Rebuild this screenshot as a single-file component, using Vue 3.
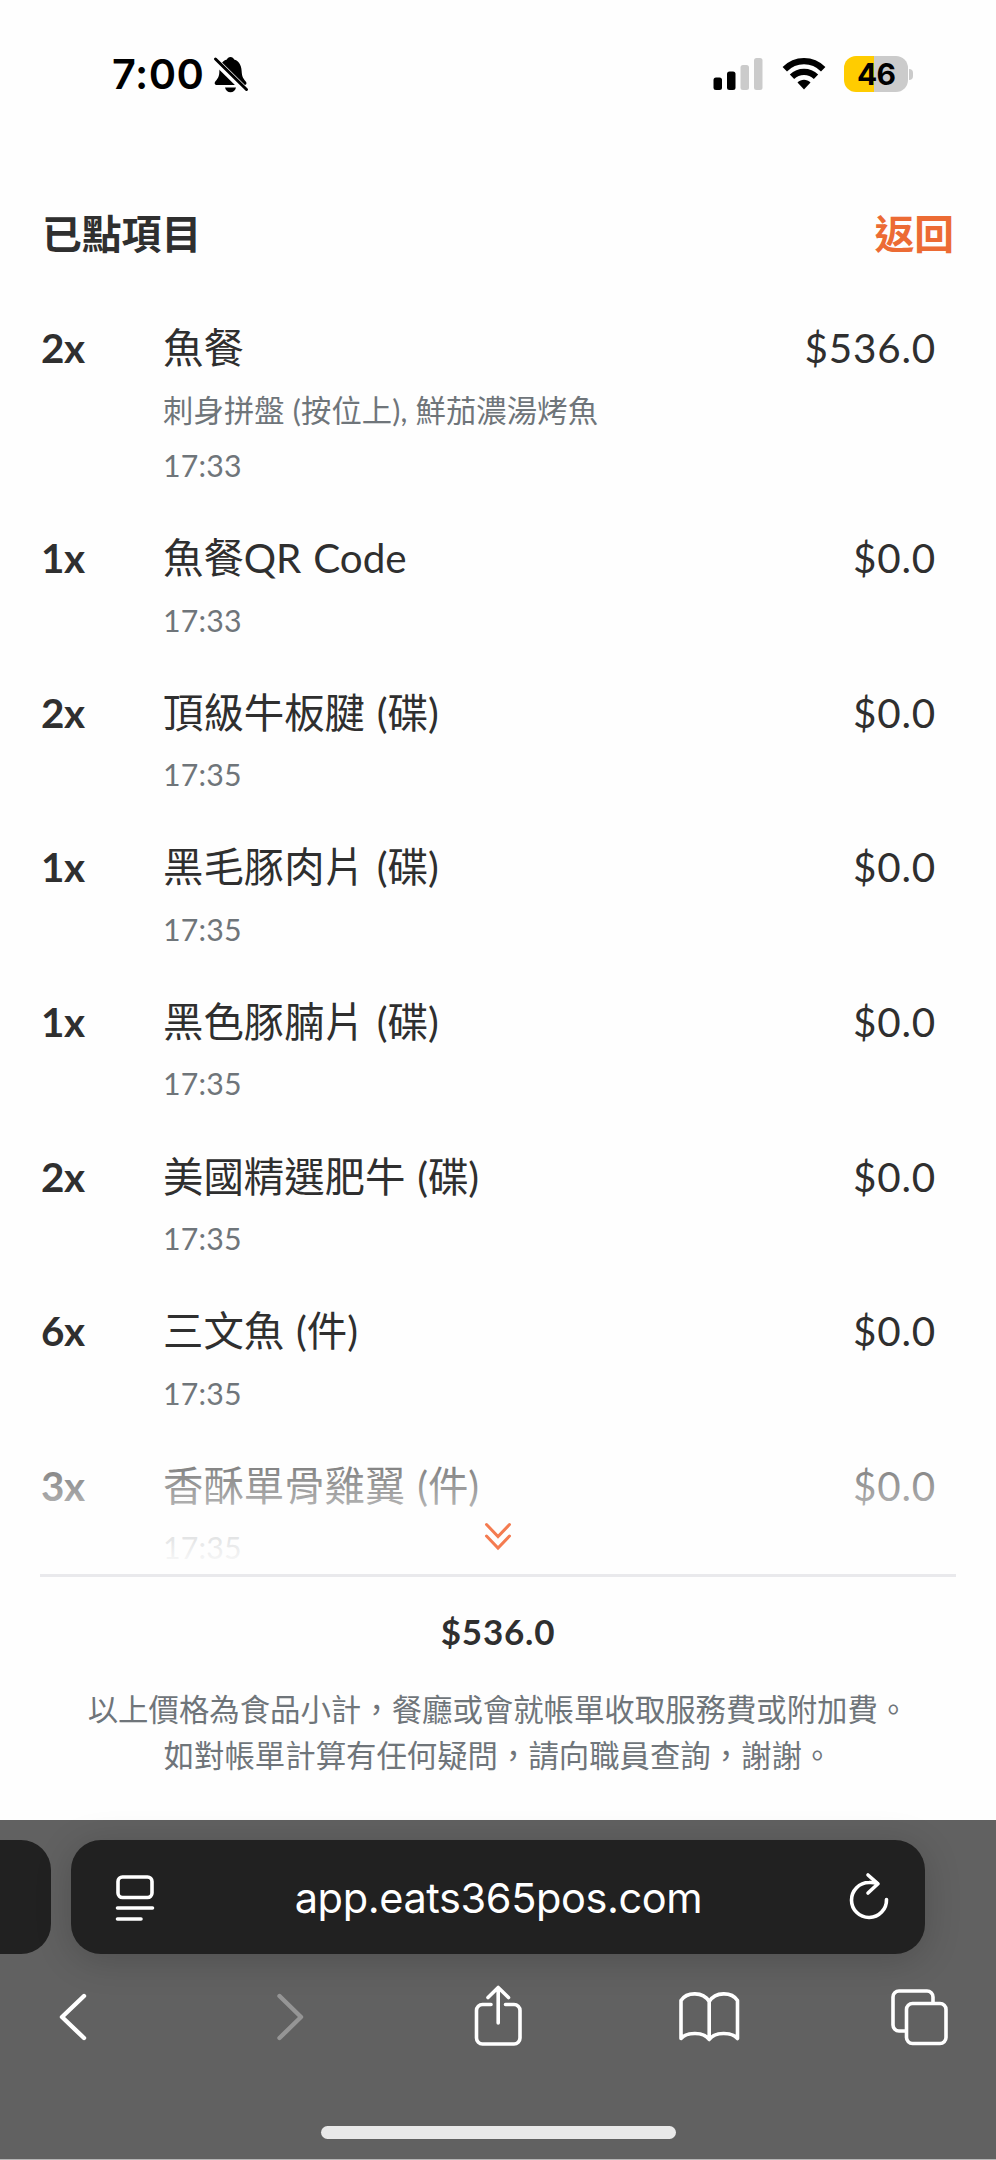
<template>
  <div class="phone" lang="zh-Hant">
    <header class="status-bar">
      <span class="clock">7:00</span>
      <svg class="bell" width="36" height="38" viewBox="0 0 36 38">
        <path
          d="M17.5 2c-1.900 0-3 1.200-3.600 2.500C7.800 6.200 6.500 12 6.300 18c-.3 4.500-2.500 6.500-4.300 9-.9 1.400 0 3 1.600 3h28c1.700 0 2.400-1.600 1.500-3-1.800-2.500-4-4.500-4.300-9C28.600 12 27.200 6.200 21.100 4.500 20.500 3.200 19.400 2 17.500 2z"
        />
        <path d="M12 32.500h11c-.7 2.800-2.800 4.800-5.500 4.800s-4.800-2-5.500-4.800z" />
        <path d="M-1 2.500L36 39" stroke="#fff" stroke-width="7" />
        <path
          d="M2.500 4L33.500 34.500"
          stroke="#000"
          stroke-width="3"
          stroke-linecap="round"
        />
      </svg>

      <svg class="signal" width="51" height="34" viewBox="0 0 51 34">
        <rect x="0.500" y="20.500" width="8.500" height="12.500" rx="2.500" />
        <rect x="14" y="14.500" width="8.500" height="18.500" rx="2.500" />
        <rect x="27.500" y="8" width="8.500" height="25" rx="2.500" fill="#cbcbcb" />
        <rect x="41" y="1" width="8.500" height="32" rx="2.500" fill="#cbcbcb" />
      </svg>
      <svg class="wifi" width="44" height="34" viewBox="0 0 44 34">
        <g fill="none" stroke="#000" stroke-width="6.200">
          <path d="M2.800 12.200C13.500 1.400 30.500 1.400 41.200 12.200" />
          <path d="M10 19.800C16.800 13.200 27.200 13.200 34 19.800" />
        </g>
        <path d="M15.500 25.500c3.700-3.600 9.300-3.600 13 0L22 32.500z" />
      </svg>
      <div class="battery"><span>46</span></div>
      <div class="battery-nub"></div>
    </header>

    <div class="title-row">
      <h1>已點項目</h1>
      <a class="back">返回</a>
    </div>

    <div class="orders">
      <div v-for="item in items" :key="item.name" class="item">
        <div class="qty">{{ item.qty }}x</div>
        <div class="detail">
          <div class="name">{{ item.name }}</div>
          <div v-if="item.options" class="meta">{{ item.options }}</div>
          <div class="meta">{{ item.time }}</div>
        </div>
        <div class="price">{{ item.price }}</div>
      </div>
      <div class="fade">
        <svg width="30" height="32" viewBox="0 0 30 32">
          <path d="M3.500 4.500L15 16.500L26.500 4.500M3.500 16L15 28L26.500 16" />
        </svg>
      </div>
    </div>

    <div class="summary">
      <div class="total">$536.0</div>
      <p>以上價格為食品小計，餐廳或會就帳單收取服務費或附加費。</p>
      <p>如對帳單計算有任何疑問，請向職員查詢，謝謝。</p>
    </div>

    <footer class="browser">
      <div class="tabs">
        <div class="prev-tab"></div>
        <div class="address">
          <svg width="42" height="50" viewBox="0 0 42 50">
            <rect x="4" y="5" width="34" height="20.500" rx="4.500" />
            <path d="M3.500 36H38.500M3.500 47H27" />
          </svg>
          <span class="url">app.eats365pos.com</span>
          <svg width="42" height="50" viewBox="0 0 42 50">
            <path d="M38.500 27.500A17.500 17.500 0 1 1 21 10.500Q25.500 10.200 29 11.500" />
            <path d="M20 3L30 11.800L20 21" />
          </svg>
        </div>
      </div>

      <nav class="toolbar">
        <svg viewBox="0 0 70 70"><path class="thick" d="M46 16L24 37L46 58" /></svg>
        <svg class="disabled" viewBox="0 0 70 70">
          <path class="thick" d="M29.500 16L51 37L29.500 58" />
        </svg>
        <svg viewBox="0 0 70 70">
          <path
            d="M29 24.500H20.500a6 6 0 0 0-6 6V58a6 6 0 0 0 6 6H52a6 6 0 0 0 6-6V30.500a6 6 0 0 0-6-6H43.500"
          />
          <path d="M36.200 43V8M26 17.500L36.200 7.500L46.500 17.500" />
        </svg>
        <svg viewBox="0 0 70 70">
          <path
            d="M36.200 21.500C30 11.500 14 11.500 8 20.500V58.500C14 52 30 51.500 36.200 59.500C42.500 51.500 58.500 52 64.500 58.500V20.500C58.500 11.500 42.500 11.500 36.200 21.500V59.500"
          />
        </svg>
        <svg viewBox="0 0 70 70">
          <path d="M20 51H14a6 6 0 0 1-6-6V17a6 6 0 0 1 6-6H42a6 6 0 0 1 6 6V22" />
          <rect x="21.500" y="23.500" width="39.500" height="40" rx="6" />
        </svg>
      </nav>
      <div class="home-indicator"></div>
    </footer>
  </div>
</template>

<script setup>
const items = [
  {
    qty: 2,
    name: "魚餐",
    options: "刺身拼盤 (按位上), 鮮茄濃湯烤魚",
    time: "17:33",
    price: "$536.0",
  },
  { qty: 1, name: "魚餐QR Code", time: "17:33", price: "$0.0" },
  { qty: 2, name: "頂級牛板腱 (碟)", time: "17:35", price: "$0.0" },
  { qty: 1, name: "黑毛豚肉片 (碟)", time: "17:35", price: "$0.0" },
  { qty: 1, name: "黑色豚腩片 (碟)", time: "17:35", price: "$0.0" },
  { qty: 2, name: "美國精選肥牛 (碟)", time: "17:35", price: "$0.0" },
  { qty: 6, name: "三文魚 (件)", time: "17:35", price: "$0.0" },
  { qty: 3, name: "香酥單骨雞翼 (件)", time: "17:35", price: "$0.0" },
];
</script>

<style>
body {
  margin: 0;
  background: #fefefe;
}
</style>

<style scoped>
.phone {
  display: flex;
  flex-direction: column;
  width: 996px;
  height: 2160px;
  overflow: hidden;
  box-sizing: border-box;
  color: #2f2f2f;
  background: #fefefe;
  font-family: Lato, "Noto Sans CJK TC", sans-serif;
}

.status-bar {
  display: flex;
  align-items: center;
  box-sizing: border-box;
  height: 148px;
  padding: 0 83px 0 112px;
  color: #000;
  font-family: Inter, sans-serif;
}
.clock {
  width: 101px;
  font-size: 41.500px;
  font-weight: 600;
  line-height: 50px;
  letter-spacing: 0.500px;
}
.signal {
  margin-left: auto;
}
.wifi {
  margin: 0 18px 0 18px;
}
.battery {
  width: 64px;
  height: 36px;
  border-radius: 12px;
  background: linear-gradient(90deg, #ffcc00 30px, #cbcbcb 30px);
  font-size: 30px;
  font-weight: 700;
  line-height: 36px;
  letter-spacing: -1px;
  text-align: center;
}
.battery-nub {
  width: 4px;
  height: 11px;
  margin-left: 1px;
  border-radius: 0 5px 5px 0;
  background: #cbcbcb;
}

.title-row {
  display: flex;
  justify-content: space-between;
  height: 170px;
  padding: 56px 42px 0;
  box-sizing: border-box;
}
h1,
.back {
  margin: 0;
  font-size: 39.800px;
  font-weight: 700;
  line-height: 60px;
}
.back {
  color: #ec6b34;
}

.orders {
  position: relative;
  height: 1256px;
  margin: 0 40px;
  border-bottom: 3px solid #e9e9ec;
  overflow: hidden;
}
.item {
  display: flex;
  padding: 0 20px 34.500px 1px;
  font-size: 40.400px;
  line-height: 60px;
}
.qty {
  width: 122px;
  font-size: 40.400px;
  font-weight: 700;
  letter-spacing: -0.500px;
}
.detail {
  flex: 1;
}
.name {
  margin-bottom: 4.500px;
  word-spacing: 1.500px;
}
.price {
  letter-spacing: 0.800px;
}
.meta {
  color: #6f757a;
  font-size: 30.300px;
  line-height: 55.600px;
  letter-spacing: 0.150px;
}
.fade {
  position: absolute;
  right: 0;
  bottom: 0;
  left: 0;
  display: flex;
  justify-content: center;
  height: 178px;
  background: linear-gradient(rgba(254, 254, 254, 0), #fefefe 98%);
}
.fade svg {
  margin-top: 124px;
  fill: none;
  stroke: #f47b50;
  stroke-width: 3;
  stroke-linecap: round;
}

.summary {
  flex: 1;
  padding-top: 30px;
  text-align: center;
}
.total {
  margin-bottom: 31px;
  font-size: 35px;
  font-weight: 700;
  line-height: 48px;
  letter-spacing: 0.800px;
}
p {
  margin: 0;
  color: #6f757a;
  font-size: 30.400px;
  line-height: 46px;
}

.browser {
  height: 340px;
  box-sizing: border-box;
  border-bottom: 1px solid #b5b5b5;
  background: #616161;
}
.tabs {
  display: flex;
  gap: 20px;
  padding-top: 20px;
}
.prev-tab {
  width: 51px;
  height: 114px;
  border-radius: 0 30px 30px 0;
  background: #212121;
}
.address {
  display: flex;
  align-items: center;
  justify-content: space-between;
  box-sizing: border-box;
  width: 854px;
  height: 114px;
  padding: 0 35px 0 43px;
  border-radius: 30px;
  background: #212121;
  box-shadow: 0 6px 36px rgba(0, 0, 0, 0.180);
}
.address svg,
.toolbar svg {
  fill: none;
  stroke: #fff;
  stroke-width: 3.600;
  stroke-linecap: round;
  stroke-linejoin: round;
}
.url {
  padding-top: 2px;
  margin-right: 7px;
  color: #fff;
  font-family: Inter, sans-serif;
  font-size: 41.500px;
  line-height: 60px;
  letter-spacing: -0.400px;
}
.toolbar {
  display: flex;
  justify-content: space-between;
  padding: 26px 41px 0 38px;
}
.toolbar svg {
  width: 70px;
  height: 70px;
}
.toolbar .thick {
  stroke-width: 4.400;
}
.toolbar .disabled {
  stroke: #959595;
}
.home-indicator {
  width: 355px;
  height: 13px;
  margin: 76px auto 0;
  border-radius: 7px;
  background: #e9e9e9;
}
</style>
